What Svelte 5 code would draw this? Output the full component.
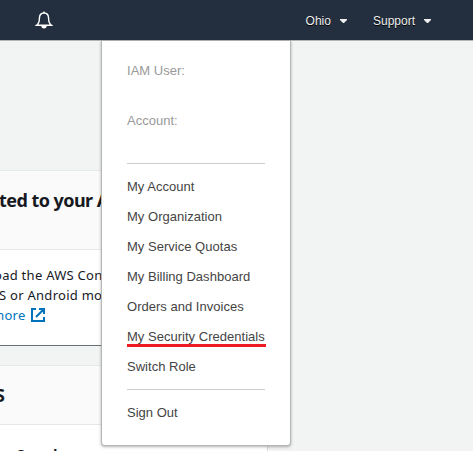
<script>
  const account = ['My Account', 'My Organization', 'My Service Quotas', 'My Billing Dashboard', 'Orders and Invoices', 'My Security Credentials', 'Switch Role'];
</script>

<div class="screen">
  <header>
    <svg class="bell" width="18" height="18" viewBox="0 0 18 18" fill="none" stroke="#fff" stroke-width="1.4">
      <path d="M1.5 14.2C3.7 12.6 4.4 11 4.4 7.4C4.4 4.1 6 2 9 2S13.6 4.1 13.6 7.4C13.6 11 14.3 12.6 16.5 14.2Z" />
      <path d="M9 .4v1.5" />
      <path d="M6.3 14.7h5.4a2.7 2.7 0 0 1-5.4 0z" fill="#fff" stroke="none" />
    </svg>
    <div class="nav ohio">Ohio<svg width="7" height="4" viewBox="0 0 7 4"><path d="M0 0H7V1L4 4H3L0 1Z" fill="#eee" /></svg></div>
    <div class="nav">Support<svg width="7" height="4" viewBox="0 0 7 4"><path d="M0 0H7V1L4 4H3L0 1Z" fill="#eee" /></svg></div>
  </header>
  <main>
    <section class="card first">
      <h2>ted to your A</h2>
      <div class="copy">
        <p class="l1">oad the AWS Con</p>
        <p class="l2">S or Android mo</p>
        <p class="more">more<svg width="14" height="14" viewBox="0 0 14 14" fill="none" stroke="#0073bb" stroke-width="2"><path d="M5 1H1v12h12V9M8 1h5v5M13 1L5 9" /></svg></p>
      </div>
    </section>
    <section class="card second">
      <h2>S</h2>
      <div class="copy"><h3>Guard</h3></div>
    </section>
  </main>
  <nav class="menu">
    <p class="label">IAM User:</p>
    <p class="label">Account:</p>
    <ul>
      {#each account as item}
        <li><span class:marked={item === 'My Security Credentials'}>{item}</span></li>
      {/each}
    </ul>
    <p class="out">Sign Out</p>
  </nav>
</div>

<style>
  :global(body) { margin: 0; }
  .screen { position: relative; width: 473px; height: 451px; overflow: hidden; background: #f2f3f3; }
  .screen, .screen * { box-sizing: border-box; }
  h2, h3, p, ul { margin: 0; padding: 0; }
  header { height: 41px; display: flex; align-items: center; padding: 0 42px 0 35px; background: #232f3e; border-bottom: 1px solid #b4b4b4; }
  .bell { margin-right: auto; }
  .nav { display: flex; align-items: center; padding-top: 1px; font: 12px/20px "Liberation Sans", sans-serif; color: #eee; text-shadow: 0 1px 0 #000; }
  .nav svg { margin: 1px 0 0 9px; }
  .ohio { margin-right: 26px; }
  main { padding-top: 129px; }
  .card { width: 268px; background: #fff; border-top: 1px solid #e6e9e9; border-right: 1px solid #d5dbdb; font-family: "Noto Sans", sans-serif; color: #16191f; white-space: nowrap; overflow: hidden; }
  .card h2 { background: #fafafa; border-bottom: 1px solid #e6e9e9; font-size: 18px; line-height: 22px; letter-spacing: -.55px; }
  .first { height: 176px; border-bottom: 1px solid #687078; }
  .first h2 { height: 79px; padding-top: 18px; text-indent: -1px; }
  .first .copy { padding-top: 15px; font-size: 13px; line-height: 20px; letter-spacing: .27px; }
  .l1 { text-indent: -6px; }
  .l2 { text-indent: -1px; }
  .more { display: flex; align-items: center; color: #0073bb; text-indent: -8px; }
  .more svg { margin-left: 5px; }
  .second { margin-top: 19px; height: 90px; }
  .second h2 { height: 59px; padding-top: 18px; text-indent: -5px; }
  .second h3 { padding: 20px 0 0 15px; font-size: 14px; line-height: 20px; }
  .menu { position: absolute; left: 101px; top: 41px; width: 190px; height: 405px; padding: 20px 25px; background: #fff; border: 1px solid #b5b7b7; border-top: 0; border-radius: 0 0 4px 4px; box-shadow: 0 1px 3px rgba(0,0,0,.3); font: 13px/20px "Liberation Sans", sans-serif; color: #444; }
  .label { height: 50px; color: #999; }
  ul { list-style: none; margin-top: 2px; border-top: 1px solid #ccc; border-bottom: 1px solid #ccc; padding: 8px 0; height: 227px; }
  li { height: 30px; line-height: 30px; white-space: nowrap; }
  li, .out, .label { letter-spacing: .02px; }
  .marked { position: relative; }
  .marked::after { content: ""; position: absolute; left: 0; top: 15px; width: 139px; height: 3px; background: #ed1c24; }
  .out { padding-top: 13px; }
</style>
